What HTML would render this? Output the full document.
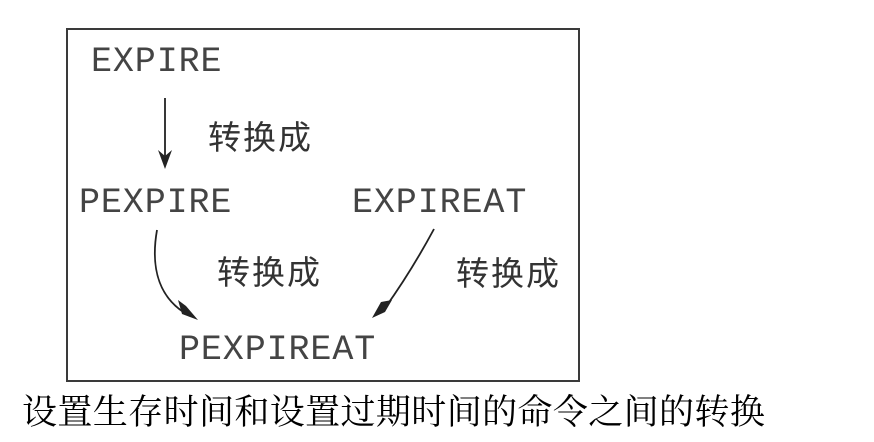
<!DOCTYPE html>
<html><head><meta charset="utf-8"><style>
body{margin:0;width:874px;height:442px;background:#fff;position:relative;overflow:hidden}
.box{position:absolute;left:66px;top:28px;width:510px;height:350px;border:2px solid #3a3a3a}
.m{position:absolute;font-family:"Liberation Mono","Courier New",monospace;font-size:35px;line-height:1;color:#444;letter-spacing:0.9px;white-space:nowrap}
.c{position:absolute;font-family:"Liberation Sans","Noto Sans CJK SC",sans-serif;font-size:33px;line-height:1;color:#333;letter-spacing:2px;white-space:nowrap}
.cap{position:absolute;left:22px;top:395px;font-family:"Liberation Serif","Noto Serif CJK SC",serif;font-size:35px;line-height:1;color:#000;white-space:nowrap}
.cap span{display:inline-block;width:35.4px;overflow:visible}
</style></head><body>
<div class="box"></div>
<div class="m" style="left:91px;top:45px">EXPIRE</div>
<div class="m" style="left:79px;top:186px">PEXPIRE</div>
<div class="m" style="left:352px;top:186px">EXPIREAT</div>
<div class="m" style="left:179px;top:333px">PEXPIREAT</div>
<div class="c" style="left:208px;top:121px">转换成</div>
<div class="c" style="left:217px;top:256px">转换成</div>
<div class="c" style="left:456px;top:257px">转换成</div>
<svg width="874" height="442" style="position:absolute;left:0;top:0">
<g stroke="#222" stroke-width="1.8" fill="none">
<path d="M165 98 L165 160"/>
<path d="M157 230 C150 270 160 300 190 316"/>
<path d="M434 229 C420 255 405 280 385 308"/>
</g>
<g fill="#222">
<path d="M158 150 L165 169 L172 150 L165 156 Z"/>
<path d="M178 300 L198 320 L186 306 Z M178 300 L198 320 L182 314 Z"/>
<path d="M372 318 L392 300 L385 312 Z M372 318 L392 300 L381 302 Z"/>
</g>
</svg>
<div class="cap"><span>设</span><span>置</span><span>生</span><span>存</span><span>时</span><span>间</span><span>和</span><span>设</span><span>置</span><span>过</span><span>期</span><span>时</span><span>间</span><span>的</span><span>命</span><span>令</span><span>之</span><span>间</span><span>的</span><span>转</span><span>换</span></div>
</body></html>
